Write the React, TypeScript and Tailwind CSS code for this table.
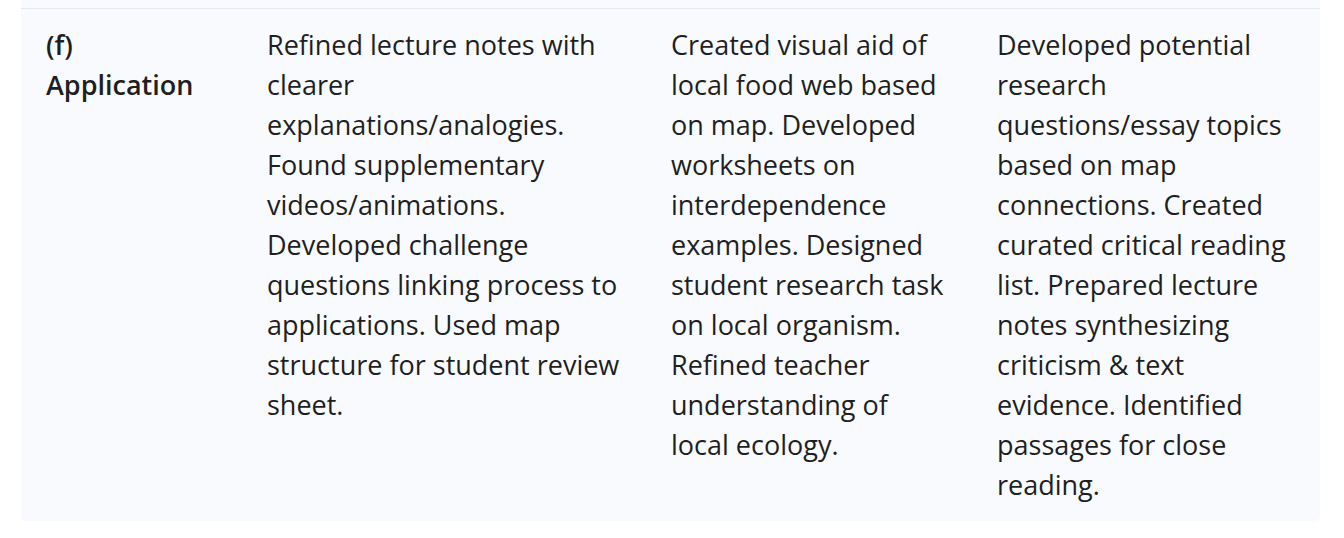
const rows = [
  {
    label: ["(f)", "Application"],
    cells: [
      "Refined lecture notes with clearer explanations/analogies. Found supplementary videos/animations. Developed challenge questions linking process to applications. Used map structure for student review sheet.",
      "Created visual aid of local food web based on map. Developed worksheets on interdependence examples. Designed student research task on local organism. Refined teacher understanding of local ecology.",
      "Developed potential research questions/essay topics based on map connections. Created curated critical reading list. Prepared lecture notes synthesizing criticism & text evidence. Identified passages for close reading.",
    ],
  },
];

export default function App() {
  return (
    <div className="w-[1344px] h-[538px] bg-white pl-[21px] pr-[24px] overflow-hidden">
      <div
        className="bg-[#f8fafd] rounded-b-[5px] pt-[8px] text-[#1f1f1f] text-[27px] leading-[40px]"
        style={{ fontFamily: "'Open Sans', 'Noto Sans', sans-serif" }}
      >
        {rows.map((r, i) => (
          <div
            key={i}
            className="grid grid-cols-[222px_404px_326px_347px] border-t-[1.5px] border-[#e3e8ef]"
          >
            <div className="px-[25px] pt-[16px] pb-[16px] font-semibold">
              {r.label.map((l) => (
                <div key={l}>{l}</div>
              ))}
            </div>
            {r.cells.map((c, j) => (
              <div key={j} className="px-[24px] pt-[16px] pb-[16px]">
                {c}
              </div>
            ))}
          </div>
        ))}
      </div>
    </div>
  );
}
